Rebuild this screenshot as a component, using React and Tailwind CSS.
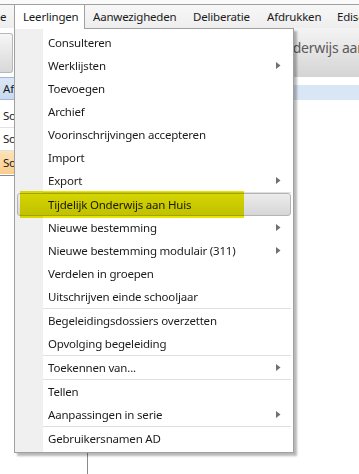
import { Fragment } from 'react'

// ── Menu data ────────────────────────────────────────────────
const TOP_MENU = [
  { label: 'Leerlingen', w: 'w-[71px]', open: true },
  { label: 'Aanwezigheden', w: 'w-[100px]' },
  { label: 'Deliberatie', w: 'w-[74px]' },
  { label: 'Afdrukken', w: 'w-[70px]' },
  { label: 'Edison', w: 'w-[60px]' },
]

const ITEMS = [
  { label: 'Consulteren' },
  { label: 'Werklijsten', sub: true },
  { label: 'Toevoegen' },
  { label: 'Archief' },
  { label: 'Voorinschrijvingen accepteren' },
  { label: 'Import' },
  { label: 'Export', sub: true },
  { sep: true },
  { label: 'Tijdelijk Onderwijs aan Huis', active: true },
  { label: 'Nieuwe bestemming', sub: true },
  { label: 'Nieuwe bestemming modulair (311)', sub: true },
  { label: 'Verdelen in groepen' },
  { label: 'Uitschrijven einde schooljaar' },
  { sep: true },
  { label: 'Begeleidingsdossiers overzetten' },
  { label: 'Opvolging begeleiding' },
  { sep: true },
  { label: 'Toekennen van...', sub: true },
  { sep: true },
  { label: 'Tellen' },
  { label: 'Aanpassingen in serie', sub: true },
  { sep: true },
  { label: 'Gebruikersnamen AD' },
]

function SubArrow() {
  return (
    <svg width="5" height="7" viewBox="0 0 5 7" className="shrink-0">
      <path d="M0 0L4.5 3.5L0 7Z" fill="#707070" />
    </svg>
  )
}

// ── Menubalk ─────────────────────────────────────────────────
function MenuBar() {
  return (
    <div className="h-[28px] bg-[#fafafa]">
      <div className="h-[4px]" />
      <div className="h-[24px] flex border-t border-[#a0a0a0] bg-gradient-to-b from-[#f7f7f7] to-[#eeeeee] whitespace-nowrap overflow-hidden">
        <div className="w-[14px] shrink-0 h-full flex items-center overflow-hidden">
          <span>e</span>
        </div>
        {TOP_MENU.map((m) => (
          <div
            key={m.label}
            className={`${m.w} shrink-0 h-full flex items-center pl-[8px] ${
              m.open ? 'bg-white border-x border-[#a0a0a0] relative z-20 h-[25px]' : ''
            }`}
          >
            {m.label}
          </div>
        ))}
      </div>
    </div>
  )
}

// ── Achtergrond (venster achter het menu) ───────────────────
function Background() {
  return (
    <div className="flex h-[446px]">
      {/* linkerpaneel */}
      <div className="w-[88px] shrink-0 border-r border-[#8a8a8a] flex flex-col">
        <div className="h-[49px] pt-[5px] pb-[4px]">
          <div className="w-[13px] h-full rounded-r-[3px] border border-l-0 border-[#b8b8b8] bg-gradient-to-b from-[#f6f6f6] to-[#d8d8d8]" />
        </div>
        <div className="h-[23px] flex items-center pl-[3px] border-y border-[#9fb8d8] bg-gradient-to-b from-[#dbe7f6] to-[#c7daf1]">
          Afdeling
        </div>
        <div className="h-[5px]" />
        <div className="h-[23px] flex items-center pl-[3px] border-b border-[#e2e2e2]">Sofie</div>
        <div className="h-[23px] flex items-center pl-[3px] border-b border-[#e2e2e2]">Sofie</div>
        <div className="h-[23px] flex items-center pl-[3px] bg-gradient-to-b from-[#fde3b8] to-[#fbcd8a]">Sofie</div>
        <div className="h-[2px] border-b border-[#8a8a8a]" />
      </div>

      {/* rechterpaneel */}
      <div className="flex-1 flex flex-col overflow-hidden">
        <div className="h-[49px] pt-[9px] pl-[134px] bg-gradient-to-b from-[#f4f4f4] to-[#d4d4d4] whitespace-nowrap text-[14px] text-[#5a5a5a]">
          Tijdelijk Onderwijs aan Huis
        </div>
        <div className="h-[8px]" />
        <div className="h-[15px] bg-[#d9e6f6]" />
      </div>
    </div>
  )
}

// ── Uitklapmenu ──────────────────────────────────────────────
function Dropdown() {
  return (
    <div className="absolute left-[14px] top-[28px] w-[280px] z-10 shadow-[3px_3px_2px_rgba(0,0,0,0.28)]">
      <div className="relative border border-[#a0a0a0] bg-white py-[2px]">
        {/* gutter */}
        <div className="absolute left-0 top-0 bottom-0 w-[28px] bg-[#f0f0f0]" />
        {/* aansluiting met menubalk */}
        <div className="absolute -top-[1px] left-0 w-[69px] h-[1px] bg-white" />

        {ITEMS.map((it, i) =>
          it.sep ? (
            <div key={i} className="relative h-[1px] ml-[28px] mr-[2px] bg-[#e0e0e0]" />
          ) : (
            <div key={i} className="relative h-[23px] flex items-center whitespace-nowrap">
              {it.active && (
                <Fragment>
                  <div className="absolute left-[2px] right-[2px] top-0 bottom-0 rounded-[3px] border border-[#b4b4b4] bg-gradient-to-b from-[#ececec] to-[#d6d6d6]" />
                  <div className="absolute left-[5px] w-[224px] -top-[2px] -bottom-[2px] bg-[#e6e600] mix-blend-multiply z-10" />
                </Fragment>
              )}
              <span className="relative pl-[33px] flex-1">{it.label}</span>
              {it.sub && (
                <span className="relative mr-[12px]">
                  <SubArrow />
                </span>
              )}
            </div>
          )
        )}
      </div>
    </div>
  )
}

export default function App() {
  return (
    <div className="relative w-[359px] h-[474px] overflow-hidden bg-white text-[11.5px] tracking-[-0.2px] text-[#1b1b1b] font-['Segoe_UI','Noto_Sans',sans-serif]">
      <MenuBar />
      <Background />
      <Dropdown />
    </div>
  )
}
